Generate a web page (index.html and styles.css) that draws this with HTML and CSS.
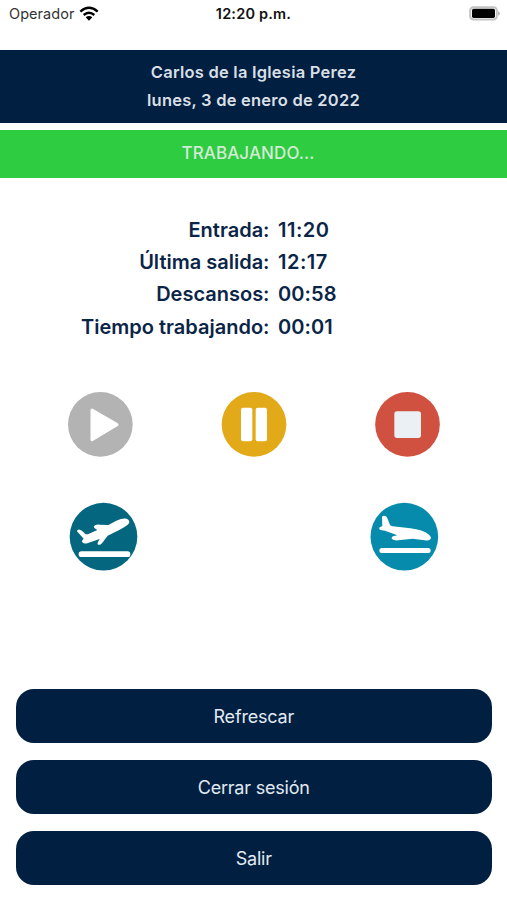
FILE: index.html
```html
<!DOCTYPE html>
<html lang="es">
<head>
<meta charset="utf-8">
<meta name="viewport" content="width=device-width, initial-scale=1">
<title>Control horario</title>
<link rel="stylesheet" href="styles.css">
</head>
<body>
<div class="status">
  <div class="carrier"><span>Operador</span>
    <svg class="wifi" width="20" height="16" viewBox="0 0 60 48"><g fill="none" stroke="#000" stroke-width="7"><path d="M4 17Q30-6 56 17"/><path d="M14 27Q30 13 46 27"/></g><path d="M20 34Q30 26 40 34L30 44Z"/></svg>
  </div>
  <div class="clock">12:20 p.m.</div>
  <svg class="battery" width="32" height="16" viewBox="0 0 96 48"><rect x="6.500" y="6.500" width="80" height="37" rx="10" fill="#fff" stroke="#c2c2c2" stroke-width="6"/><path d="M90 18q6 2 6 7t-6 7z" fill="#bdbdbd"/><rect x="12" y="11" width="69" height="28" rx="5"/></svg>
</div>
<header class="header">
  <div class="name">Carlos de la Iglesia Perez</div>
  <div class="date">lunes, 3 de enero de 2022</div>
</header>
<div class="state"><span>TRABAJANDO...</span></div>
<dl class="times">
  <dt>Entrada:</dt><dd class="wide">11:20</dd>
  <dt>Última salida:</dt><dd class="wide">12:17</dd>
  <dt>Descansos:</dt><dd>00:58</dd>
  <dt>Tiempo trabajando:</dt><dd>00:01</dd>
</dl>
<div class="controls">
  <svg width="66" height="66" viewBox="21 18 198 198"><circle cx="121" cy="118" r="97" fill="#b3b3b3"/><path d="M96 75L171 119L96 164Z" fill="#fff" stroke="#fff" stroke-width="9" stroke-linejoin="round"/></svg>
  <svg width="66" height="66" viewBox="33 18 198 198"><circle cx="132" cy="118" r="97" fill="#e2a918"/><rect x="93" y="68" width="34" height="101" rx="6" fill="#fff"/><rect x="137" y="68" width="34" height="101" rx="6" fill="#fff"/></svg>
  <svg width="66" height="66" viewBox="492 18 198 198"><circle cx="592.500" cy="118" r="97" fill="#d15141"/><rect x="553" y="79" width="80" height="80" rx="8" fill="#ebf0f5"/></svg>
</div>
<div class="trips">
  <svg width="70" height="70" viewBox="24 21 210 210"><circle cx="130.500" cy="125" r="101.500" fill="#04677f"/><g fill="#fff"><path d="M51 109Q51 103 59 104Q65 105 69 110L76 117Q81 119 87 116L112 105L103 99Q99 94 105 91Q111 88 119 89L145 90L169 77Q195 66 205 74Q212 81 203 89Q196 95 179 104L143 122L126 145Q121 151 114 149Q111 147 114 141L119 132L84 144Q73 148 67 142Q64 140 68 134L71 131Z"/><rect x="56" y="169" width="155" height="17" rx="8.500"/></g></svg>
  <svg width="70" height="70" viewBox="27 21 210 210"><circle cx="133" cy="125" r="101.500" fill="#068bac"/><g fill="#fff"><path d="M66 66Q68 61 76 63Q80 64 82 70L90 89Q92 93 98 94L151 100Q188 104 207 119Q216 127 211 133Q206 138 194 136L158 131L114 136Q101 137 95 131Q94 127 99 124L112 121L75 107L62 105Q55 102 59 97L67 93Z"/><rect x="58" y="159" width="154" height="15" rx="7.500"/></g></svg>
</div>
<div class="actions">
  <button>Refrescar</button>
  <button>Cerrar sesión</button>
  <button>Salir</button>
</div>
</body>
</html>
```
FILE: styles.css
```css
* { box-sizing: border-box; }
body { margin: 0; width: 507px; height: 900px; overflow: hidden; background: #fff; font-family: Inter, "Liberation Sans", sans-serif; }
svg { display: block; }
.status { height: 49.5px; padding: 5px 7px 0 9px; display: grid; grid-template-columns: 1fr auto 1fr; align-items: start; color: #111; }
.carrier { display: flex; align-items: center; gap: 5px; font-size: 14.5px; line-height: 18px; height: 18px; color: #333; letter-spacing: 0.05px; }
.clock { font-size: 14.5px; line-height: 18px; font-weight: 600; letter-spacing: 0.2px; margin-left: -2px; }
.battery { justify-self: end; }
.header { height: 73.5px; padding-top: 8.5px; background: #001f41; color: #d9dfe5; text-align: center; font-size: 16.5px; line-height: 28px; font-weight: 600; letter-spacing: 0.23px; }
.state { height: 48px; margin-top: 7px; background: #2ecc40; color: #d5ead6; text-align: center; font-size: 17px; line-height: 46px; font-weight: 500; letter-spacing: 0.1px; padding-right: 11px; }
.times { margin: 36px 0 0; display: grid; grid-template-columns: 269.5px 1fr; column-gap: 8.5px; grid-auto-rows: 32.2px; line-height: 32px; font-size: 20px; font-weight: 600; color: #0b2547; }
.times dt { text-align: right; }
.times dd { margin: 0; letter-spacing: 0.1px; }
.times .wide { letter-spacing: 0.5px; }
.controls { margin: 48.200px 67px 0; display: flex; justify-content: space-between; height: 66px; }
.trips { margin: 45px 68px 0; display: flex; justify-content: space-between; height: 70px; }
.actions { margin: 117.500px 15px 0 15.500px; display: grid; gap: 17px; }
.actions button { height: 54px; border: 0; border-radius: 18px; padding: 1px 0 0; background: #001f41; color: #e3eaf2; font: 400 18px/53px Inter, "Liberation Sans", sans-serif; letter-spacing: -0.2px; }
```
